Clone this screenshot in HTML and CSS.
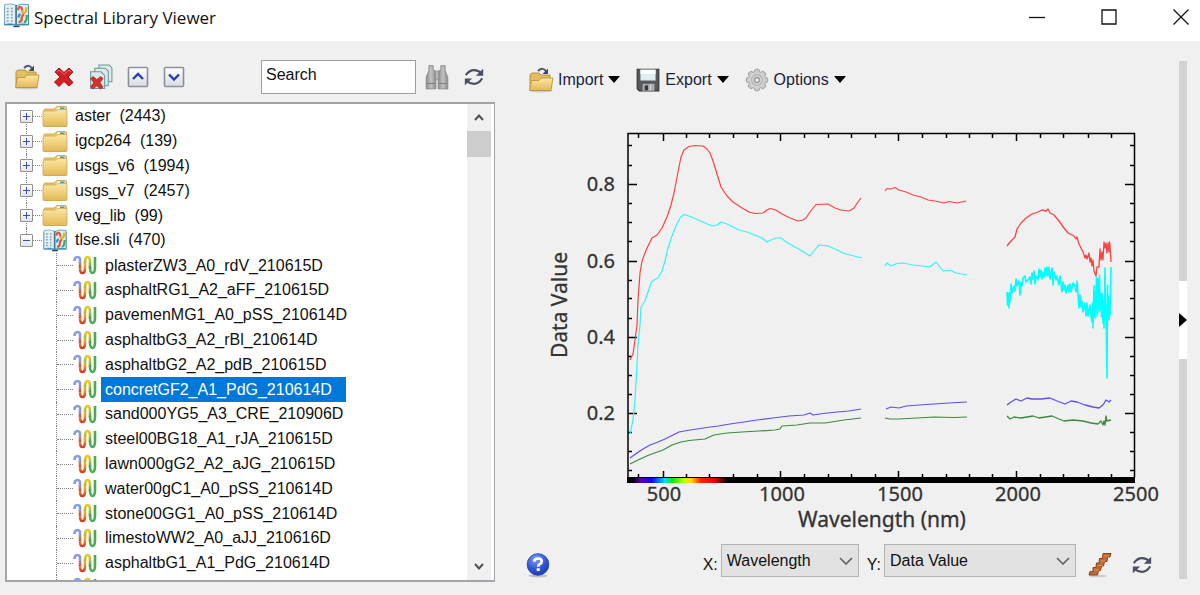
FILE: index.html
```html
<!DOCTYPE html>
<html lang="en">
<head>
<meta charset="utf-8">
<title>Spectral Library Viewer</title>
<link rel="stylesheet" href="styles.css">
</head>
<body>
<svg class="defs" aria-hidden="true">
  <defs>
    <linearGradient id="gold" x1="0" y1="0" x2="0" y2="1"><stop offset="0" stop-color="#fbe7a4"/><stop offset="1" stop-color="#e3b857"/></linearGradient>
    <linearGradient id="cool" x1="0" y1="0" x2="0" y2="1"><stop offset="0" stop-color="#7f9ff0"/><stop offset=".5" stop-color="#9a8fb8"/><stop offset="1" stop-color="#d84a30"/></linearGradient>
    <linearGradient id="warm" x1="0" y1="0" x2="0" y2="1"><stop offset="0" stop-color="#f3c21c"/><stop offset=".5" stop-color="#f0992a"/><stop offset="1" stop-color="#d6371f"/></linearGradient>
    <linearGradient id="leaf" x1="0" y1="0" x2="0" y2="1"><stop offset="0" stop-color="#f2c522"/><stop offset=".5" stop-color="#a8bd4a"/><stop offset="1" stop-color="#3f9b45"/></linearGradient>
    <linearGradient id="face" x1="0" y1="0" x2="0" y2="1"><stop offset="0" stop-color="#ffffff"/><stop offset="1" stop-color="#d9dbe2"/></linearGradient>
    <linearGradient id="steel" x1="0" y1="0" x2="1" y2="0"><stop offset="0" stop-color="#8d8d8d"/><stop offset=".5" stop-color="#c2c2c2"/><stop offset="1" stop-color="#8a8a8a"/></linearGradient>
    <radialGradient id="ball" cx=".4" cy=".25" r=".8"><stop offset="0" stop-color="#7f9ff4"/><stop offset=".6" stop-color="#2f55d4"/><stop offset="1" stop-color="#1c3aa8"/></radialGradient>
    <linearGradient id="visible"><stop offset="0" stop-color="#000"/><stop offset=".08" stop-color="#5a00b4"/><stop offset=".2" stop-color="#1000ff"/><stop offset=".34" stop-color="#00e0ff"/><stop offset=".42" stop-color="#00f000"/><stop offset=".55" stop-color="#c8ff00"/><stop offset=".62" stop-color="#ffd800"/><stop offset=".72" stop-color="#ff2000"/><stop offset=".87" stop-color="#f00000"/><stop offset="1" stop-color="#000"/></linearGradient>
    <symbol id="i-folder" viewBox="0 0 26 22">
      <path d="M2 20V4.500q0-1 1-1h9l3-2.500h8.500q1 0 1 1V20q0 1-1 1H3q-1 0-1-1z" fill="#e8c674" stroke="#c9a14b" stroke-width=".8"/>
      <path d="M15.500 2h7.500v3.500h-9z" fill="#fff"/><path d="M18 2h4.500v1.600H18z" fill="#35a3b5"/>
      <path d="M1 6.500q0-1 1-1h11l3-1.500h8q1 0 1 1V20q0 1-1 1H2q-1 0-1-1z" fill="url(#gold)" stroke="#cda653" stroke-width=".8"/>
    </symbol>
    <symbol id="i-open" viewBox="0 0 26 26">
      <ellipse cx="13" cy="24" rx="12" ry="1.500" fill="#000" opacity=".15"/>
      <path d="M2 22V7.500l2-1.500h7l2 2h9V14" fill="#e3bd62" stroke="#b28a36" stroke-width=".9"/>
      <path d="M10 4q5-4.500 8 .5" fill="none" stroke="#4d5970" stroke-width="2"/><path d="M20 1.500v5.500h-5.500z" fill="#3e4a63"/>
      <path d="M1.500 23.500L3.500 13.500h7.500l2-2.500h12L23 23.500z" fill="url(#gold)" stroke="#bd9238" stroke-width=".9"/>
    </symbol>
    <symbol id="i-delete" viewBox="0 0 22 22">
      <path d="M2 6L6 2L11 6.500L16 2L20 6L15 11L20 16.500L16 20L11 15.500L6 20.500L1.500 16L7 11z" fill="#d21f24" stroke="#9d1319" stroke-width="1" stroke-linejoin="round"/>
      <path d="M4 6l2-2 5 4.500L16 4l2 2" fill="none" stroke="#ef6a66" stroke-width="1"/>
    </symbol>
    <symbol id="i-pages" viewBox="0 0 24 25">
      <g fill="#dbe9e8" stroke="#6e9797" stroke-width="1"><path d="M10 1h10l2.500 3v13H10z"/><path d="M6 4h10l3 3v14H6z"/><path d="M2 7.500h10l3.500 3.500v12.500H2z"/></g>
      <path d="M2 14l2.500-2 3.500 3 3.500-3 2.500 2-3 4 3 4-2.500 2L8 21l-3.500 3L2 22l3-4z" fill="#d6302e" stroke="#a92423" stroke-width=".7"/>
    </symbol>
    <symbol id="i-up" viewBox="0 0 22 22"><rect x="1.500" y="1.500" width="19" height="19" rx="1" fill="url(#face)" stroke="#8c909a" stroke-width="1.600"/><path d="M6 13L11 8l5 5" fill="none" stroke="#2340b4" stroke-width="2.400"/></symbol>
    <symbol id="i-down" viewBox="0 0 22 22"><rect x="1.500" y="1.500" width="19" height="19" rx="1" fill="url(#face)" stroke="#8c909a" stroke-width="1.600"/><path d="M6 8.500l5 5 5-5" fill="none" stroke="#2340b4" stroke-width="2.400"/></symbol>
    <symbol id="i-find" viewBox="0 0 24 24">
      <g fill="url(#steel)" stroke="#8d8d8d" stroke-width=".8"><path d="M4.500 1.500h4v3L11 8v15H2V12l2.500-6z"/><path d="M19.500 1.500h-4v3L13 8v15h9V12l-2.500-6z"/><path d="M10 6.500h4V14h-4z"/></g><path d="M2.500 18h8M13.500 18h8" stroke="#7d7d7d"/>
    </symbol>
    <symbol id="i-refresh" viewBox="0 0 24 20">
      <g fill="none" stroke="#4a5064" stroke-width="2.200"><path d="M3 8Q7 2.500 12 2.500T20 6"/><path d="M21 11.500Q17 17.500 12 17.500T4 14"/></g>
      <path d="M22 1v7.500h-8zM2 19v-7.500h8z" fill="#4a5064"/>
    </symbol>
    <symbol id="i-save" viewBox="0 0 24 24">
      <path d="M2 2h20v20H4l-2-2z" fill="#55585d" stroke="#303338"/><path d="M5 2.500h14v10H5z" fill="#dcecf0"/><path d="M5 2.500h14v4H5z" fill="#f8fdfd"/>
      <path d="M7 15.500h11v6.500H7z" fill="#a8abb0"/><path d="M9 17h3v4.500H9z" fill="#33363b"/><path d="M14.500 16v5.500" stroke="#d7d9db"/>
    </symbol>
    <symbol id="i-gear" viewBox="0 0 24 24">
      <g fill="#c9c9c9" stroke="#9a9a9a" stroke-width=".8"><g id="teeth"><rect x="9.500" y="2" width="5" height="20" rx="2"/><rect x="2" y="9.500" width="20" height="5" rx="2"/></g><use href="#teeth" transform="rotate(45 12 12)"/></g>
      <circle cx="12" cy="12" r="7.500" fill="#d2d2d2"/><circle cx="12" cy="12" r="5" fill="none" stroke="#b0b0b0"/><circle cx="12" cy="12" r="2.200" fill="#eee" stroke="#8a8a8a"/>
    </symbol>
    <symbol id="i-book" viewBox="0 0 26 24">
      <path d="M1 3h24v18.500H1z" fill="#2878a8"/><path d="M1.500 1.500q7-1.500 11.500 1v18.500q-5-2-11.500-.5z" fill="#e4eff3" stroke="#6ba5c0" stroke-width=".8"/><path d="M13 2.500q5-2.500 11.500-1v19q-6.500-1-11.500.5z" fill="#d7eef6" stroke="#3b90b8" stroke-width=".8"/>
      <path d="M4.500 4.500v14M8.500 4.500v14" stroke="#86a4b2" stroke-width="1.800" stroke-dasharray="1.500 1.500"/><path d="M12.500 2v19.500" stroke="#3f7c92" stroke-width="1.500"/><path d="M10 22.500h6" stroke="#24485c" stroke-width="1.500"/>
      <g fill="none" stroke-width="2.200"><path d="M14.500 7q0-3 2-3t2 4" stroke="#e0593a"/><path d="M18.500 7q0 3 2 2.500t2-5.500" stroke="#efad20"/><path d="M15 14q0-3 2-3" stroke="#3a8bd4"/><path d="M15 18.500q3 0 3-3.500t2.500-3.500" stroke="#e0593a"/><path d="M20 18.500q3 0 3-7" stroke="#49a94f"/></g>
    </symbol>
    <symbol id="i-wave" viewBox="0 0 24 20">
      <g fill="none" stroke-width="2.600"><path d="M1.500 6Q1.500 2 4.500 2T7 6v7" stroke="url(#cool)"/><path d="M7 13q0 5 2.500 5t2.500-5V6" stroke="url(#warm)"/><path d="M12 8q0-6 2.500-6T17 7v6" stroke="url(#leaf)"/><path d="M17 12q0 6 2.500 6t2.500-6V2" stroke="#49aa50"/></g>
    </symbol>
    <symbol id="i-help" viewBox="0 0 24 24">
      <ellipse cx="12" cy="22" rx="9" ry="1.500" fill="#000" opacity=".2"/><circle cx="12" cy="11.500" r="10" fill="url(#ball)" stroke="#2444a8" stroke-width=".8"/>
      <path d="M8.500 9Q8.500 6 12 6T15.500 8.700Q15.500 10 13.500 11.200Q12.200 12 12.200 13.500" fill="none" stroke="#fff" stroke-width="2.400"/><rect x="10.800" y="15" width="2.800" height="2.500" fill="#fff"/>
    </symbol>
    <symbol id="i-stack" viewBox="0 0 24 26">
      <ellipse cx="10" cy="24" rx="9" ry="1.300" fill="#000" opacity=".15"/>
      <path d="M15 1.500h8l-1 3.500h-2.500l-.5 4.500h-2.500l-1 4.500h-2l-1 4.500h-2l-1 4.500H1l1-3.500h3v-4h3l.5-4.500H11l.5-4.500h3z" fill="#bf6a35" stroke="#8b421b"/>
      <path d="M15.500 4H21M12.500 9H17M9.500 13.500h5M6 18h5" stroke="#dd9560" stroke-width="1"/>
    </symbol>
    <symbol id="i-chevron" viewBox="0 0 14 8"><path d="M1 1l6 6 6-6" fill="none" stroke="#606060" stroke-width="1.600"/></symbol>
  </defs>
</svg>

<header class="titlebar">
  <svg class="app-icon"><use href="#i-book"/></svg>
  <h1>Spectral Library Viewer</h1>
  <div class="window-buttons">
    <button type="button" aria-label="Minimize"><svg viewBox="0 0 16 16"><path d="M0 8.500h16" stroke="#111" stroke-width="1.300"/></svg></button>
    <button type="button" aria-label="Maximize"><svg viewBox="0 0 16 16"><path d="M1 1h14v14H1z" fill="none" stroke="#111" stroke-width="1.300"/></svg></button>
    <button type="button" aria-label="Close"><svg viewBox="0 0 16 16"><path d="M.5.5l15 15M15.500.5l-15 15" stroke="#111" stroke-width="1.300"/></svg></button>
  </div>
</header>

<main class="workspace">
  <section class="library">
    <div class="library-tools">
      <button type="button" aria-label="Open"><svg class="icon"><use href="#i-open"/></svg></button>
      <button type="button" aria-label="Remove"><svg class="icon small"><use href="#i-delete"/></svg></button>
      <button type="button" aria-label="Remove all"><svg class="icon"><use href="#i-pages"/></svg></button>
      <button type="button" aria-label="Collapse all"><svg class="icon small"><use href="#i-up"/></svg></button>
      <button type="button" aria-label="Expand all"><svg class="icon small"><use href="#i-down"/></svg></button>
      <input class="search" type="text" value="Search" aria-label="Search">
      <button type="button" aria-label="Find"><svg class="icon"><use href="#i-find"/></svg></button>
      <button type="button" class="refresh" aria-label="Refresh"><svg class="icon small"><use href="#i-refresh"/></svg></button>
    </div>
    <div class="tree-box">
      <ul class="tree">
        <li class="branch first"><button type="button" class="toggle plus" aria-label="Expand aster"></button><i class="dots"></i><svg class="folder"><use href="#i-folder"/></svg><span>aster&nbsp; (2443)</span></li>
        <li class="branch"><button type="button" class="toggle plus" aria-label="Expand igcp264"></button><i class="dots"></i><svg class="folder"><use href="#i-folder"/></svg><span>igcp264&nbsp; (139)</span></li>
        <li class="branch"><button type="button" class="toggle plus" aria-label="Expand usgs_v6"></button><i class="dots"></i><svg class="folder"><use href="#i-folder"/></svg><span>usgs_v6&nbsp; (1994)</span></li>
        <li class="branch"><button type="button" class="toggle plus" aria-label="Expand usgs_v7"></button><i class="dots"></i><svg class="folder"><use href="#i-folder"/></svg><span>usgs_v7&nbsp; (2457)</span></li>
        <li class="branch"><button type="button" class="toggle plus" aria-label="Expand veg_lib"></button><i class="dots"></i><svg class="folder"><use href="#i-folder"/></svg><span>veg_lib&nbsp; (99)</span></li>
        <li class="branch last"><button type="button" class="toggle" aria-label="Collapse tlse.sli"></button><i class="dots"></i><svg class="folder"><use href="#i-book"/></svg><span>tlse.sli&nbsp; (470)</span></li>
        <li class="leaf"><svg class="wave"><use href="#i-wave"/></svg><span>plasterZW3_A0_rdV_210615D</span></li>
        <li class="leaf"><svg class="wave"><use href="#i-wave"/></svg><span>asphaltRG1_A2_aFF_210615D</span></li>
        <li class="leaf"><svg class="wave"><use href="#i-wave"/></svg><span>pavemenMG1_A0_pSS_210614D</span></li>
        <li class="leaf"><svg class="wave"><use href="#i-wave"/></svg><span>asphaltbG3_A2_rBl_210614D</span></li>
        <li class="leaf"><svg class="wave"><use href="#i-wave"/></svg><span>asphaltbG2_A2_pdB_210615D</span></li>
        <li class="leaf selected"><svg class="wave"><use href="#i-wave"/></svg><span>concretGF2_A1_PdG_210614D</span></li>
        <li class="leaf"><svg class="wave"><use href="#i-wave"/></svg><span>sand000YG5_A3_CRE_210906D</span></li>
        <li class="leaf"><svg class="wave"><use href="#i-wave"/></svg><span>steel00BG18_A1_rJA_210615D</span></li>
        <li class="leaf"><svg class="wave"><use href="#i-wave"/></svg><span>lawn000gG2_A2_aJG_210615D</span></li>
        <li class="leaf"><svg class="wave"><use href="#i-wave"/></svg><span>water00gC1_A0_pSS_210614D</span></li>
        <li class="leaf"><svg class="wave"><use href="#i-wave"/></svg><span>stone00GG1_A0_pSS_210614D</span></li>
        <li class="leaf"><svg class="wave"><use href="#i-wave"/></svg><span>limestoWW2_A0_aJJ_210616D</span></li>
        <li class="leaf"><svg class="wave"><use href="#i-wave"/></svg><span>asphaltbG1_A1_PdG_210614D</span></li>
        <li class="leaf peek"><svg class="wave"><use href="#i-wave"/></svg></li>
      </ul>
      <div class="scrollbar">
        <button type="button" aria-label="Scroll up"><svg class="scroll-up" viewBox="0 0 10 7"><path d="M1 6l4-4.500L9 6" fill="none" stroke="#505050" stroke-width="2"/></svg></button>
        <div class="thumb"></div>
        <button type="button" class="end" aria-label="Scroll down"><svg viewBox="0 0 10 7"><path d="M1 1l4 4.500L9 1" fill="none" stroke="#505050" stroke-width="2"/></svg></button>
      </div>
    </div>
  </section>

  <section class="plot">
    <div class="plot-tools">
      <button type="button"><svg class="icon"><use href="#i-open"/></svg>Import<i class="caret"></i></button>
      <button type="button"><svg class="icon"><use href="#i-save"/></svg>Export<i class="caret"></i></button>
      <button type="button"><svg class="icon"><use href="#i-gear"/></svg>Options<i class="caret"></i></button>
    </div>
    <svg class="chart" viewBox="496 104 684 431" role="img" aria-label="Data Value against Wavelength (nm)">
      <g class="axes">
        <path d="M629 478V133.500H1135.500V478"/>
        <path d="M664.500 134v7M781.500 134v7M899.500 134v7M1017.500 134v7M664.500 478v-7M781.500 478v-7M899.500 478v-7M1017.500 478v-7"/>
        <path d="M639.500 134v4M687.500 134v4M710.500 134v4M734.500 134v4M758.500 134v4M805.500 134v4M829.500 134v4M852.500 134v4M876.500 134v4M923.500 134v4M947.500 134v4M970.500 134v4M993.500 134v4M1041.500 134v4M1064.500 134v4M1089.500 134v4M1112.500 134v4"/>
        <path d="M639.500 478v-4M687.500 478v-4M710.500 478v-4M734.500 478v-4M758.500 478v-4M805.500 478v-4M829.500 478v-4M852.500 478v-4M876.500 478v-4M923.500 478v-4M947.500 478v-4M970.500 478v-4M993.500 478v-4M1041.500 478v-4M1064.500 478v-4M1089.500 478v-4M1112.500 478v-4"/>
        <path d="M629 184.500h9M629 261.500h9M629 337.500h9M629 413.500h9M1135 184.500h-9M1135 261.500h-9M1135 337.500h-9M1135 413.500h-9"/>
        <path d="M629 145.500h4M629 165.500h4M629 203.500h4M629 222.500h4M629 241.500h4M629 280.500h4M629 298.500h4M629 318.500h4M629 356.500h4M629 375.500h4M629 394.500h4M629 432.500h4M629 451.500h4M629 470.500h4"/>
        <path d="M1135 145.500h-4M1135 165.500h-4M1135 203.500h-4M1135 222.500h-4M1135 241.500h-4M1135 280.500h-4M1135 298.500h-4M1135 318.500h-4M1135 356.500h-4M1135 375.500h-4M1135 394.500h-4M1135 432.500h-4M1135 451.500h-4M1135 470.500h-4"/>
      </g>
      <rect x="628" y="477" width="508" height="6"/>
      <rect x="634" y="478" width="94" height="5" fill="url(#visible)"/>
      <g class="curve cyan">
        <path d="M631 434L634 420L636 400L638 365L639 345L641 325L642 307L646 301L649 292L652 283L655 280L659 278L663 271L666 261L669 248L673 236L677 226L681 218L685 214.500L690 216L697 219L706 223L713 226L718 225L722 222L728 224L734 227L740 230L748 232L758 236L763 238L768 242L772 240L777 238L782 238L789 243L796 247L803 251L811 256L815 251L820 245L829 246L836 249L844 253L853 255.500L863 258"/>
        <path d="M886 266L888 263L892 266L898 263.500L904 263L914 265L924 266L931 267L937 262L944 271L951 270L957 273L963 274L968 275"/>
        <path class="noisy" d="M1008 292L1008.500 305L1009 293L1010 308L1010.500 293L1011 302L1012 284L1013 293L1015 286L1016 291L1017 279L1018 286L1020 281L1021 295L1022 282L1023 286L1024 278L1026 276L1027 282L1029 280L1031 277L1032 284L1033 273L1034 279L1035 271L1036 284L1037 276L1039 280L1040 269L1041 277L1042 270L1043 279L1044 272L1045 277L1046 268L1047 276L1048 267L1049 276L1050 267L1051 279L1053 268L1054 285L1055 272L1057 280L1058 276L1060 285L1061 276L1063 292L1064 282L1065 290L1066 285L1067 293L1069 285L1070 292L1071 284L1072 292L1074 283L1076 286L1077 292L1078 281L1079 294L1080 308L1081 295L1082 307L1083 301L1084 312L1086 303L1087 316L1088 303L1089 316L1091 305L1092 316L1093 322L1093.500 303L1094 328L1095 286L1096 318L1096.500 292L1097 305L1097.500 277L1098 316L1099 279L1100 312L1100.500 275L1101 310L1102 294L1102.500 317L1103 293L1104 323L1104.500 301L1105 328L1106 268L1106.500 318L1107 305L1108 378L1108.500 285L1109 316L1109.500 296L1110 320L1110.500 304L1111 315L1112 267"/>
      </g>
      <g class="curve red">
        <path d="M631 360L634 354L636 340L638 325L639 300L641 273L643 261L648 248L653 238L658 235L663 228L668 217L672 205L675 193L679 172L682 157L685 150L690 146.500L696 145.500L704 146L708 149L711 153L714 161L718 174L722 187L728 196L734 202L743 208L750 212L756 213.500L764 213L768 210L771 208.500L777 210L783 214L791 218L799 221L804 220L807 218L811 212L817 204.500L829 204L836 208L842 210L850 211L855 208L859 202L862 198"/>
        <path d="M886 191L888 188.500L892 189L896 187.500L900 190L907 192L914 195L922 197L929 200L936 201L945 203L950 201.500L958 203L967 201"/>
        <path class="fuzzy" d="M1008 246L1012 241L1016 237L1018 229L1022 223L1027 218L1033 214L1039 212L1043 210L1047 211L1049 209L1051 213L1055 215L1060 221L1065 228L1069 233L1075 236L1077 239L1078 237L1080 244L1084 252L1086 258L1087 255L1088 259L1090 253L1091 262L1092 258L1093 266L1094 260L1095 271L1097 276L1098 267L1100 267L1101 249L1102 260L1103 252L1104 260L1105 242L1106 248L1107 243L1108 253L1109 243L1110 252L1110.500 242L1111 246L1112 262"/>
      </g>
      <g class="curve blue">
        <path d="M631 458L638 453L644 449L651 445L659 442L666 439L674 435L680 432L688 430.500L698 429L708 427.500L719 426L731 424L745 422L758 420L774 418L790 416L805 415L811 413L814 415L824 413.500L838 412L850 411L862 409"/>
        <path d="M887 409L892 407L900 408L907 406L920 405L935 404L950 403L968 402"/>
        <path class="fuzzy" d="M1008 405L1012 402L1017 399L1022 401L1028 398L1033 399L1042 399L1051 398L1058 401L1066 404L1072 401L1078 402L1086 405L1094 407L1100 408L1104 405L1107 400L1110 402L1112 400"/>
      </g>
      <g class="curve green">
        <path d="M631 464L639 460L650 455L664 450L673 445L682 442L690 440.500L706 439L715 435L728 433L743 432L760 431L776 430L781 429L783 426L798 425L811 423L826 423L845 420L862 418"/>
        <path d="M886 418L891 419L900 419L918 418L935 417L955 417.500L968 417"/>
        <path class="fuzzy" d="M1008 416L1011 419L1015 417L1022 418L1034 416L1040 418L1053 416L1060 419L1065 421L1074 420L1084 421L1092 423L1099 424L1102 421L1104 425L1105 421L1106 425L1107 416L1108 421L1112 420"/>
      </g>
      <g class="axis-text">
        <g class="y-ticks"><text x="616" y="191">0.8</text><text x="616" y="268">0.6</text><text x="616" y="344">0.4</text><text x="616" y="420">0.2</text></g>
        <text x="665" y="501">500</text><text x="783" y="501">1000</text><text x="901" y="501">1500</text><text x="1019" y="501">2000</text><text x="1137" y="501">2500</text>
        <text class="axis-title" x="883" y="527">Wavelength (nm)</text>
        <text class="axis-title" transform="translate(568 305) rotate(-90)">Data Value</text>
      </g>
    </svg>
    <div class="plot-footer">
      <button type="button" class="help" aria-label="Help"><svg class="icon"><use href="#i-help"/></svg></button>
      <label for="x-axis">X:</label>
      <div class="picker x-picker"><select id="x-axis"><option>Wavelength</option></select><svg><use href="#i-chevron"/></svg></div>
      <label for="y-axis">Y:</label>
      <div class="picker y-picker"><select id="y-axis"><option>Data Value</option></select><svg><use href="#i-chevron"/></svg></div>
      <button type="button" class="stack" aria-label="Stack plots"><svg class="icon"><use href="#i-stack"/></svg></button>
      <button type="button" class="reset" aria-label="Reset"><svg class="icon small"><use href="#i-refresh"/></svg></button>
    </div>
  </section>
  <div class="splitter"><button type="button" aria-label="Show side panel"><svg viewBox="0 0 8 14"><path d="M0 0l8 7-8 7z"/></svg></button></div>
</main>
</body>
</html>
```

FILE: styles.css
```css
* { box-sizing: border-box; }

body {
  display: flex;
  flex-direction: column;
  height: 100vh;
  margin: 0;
  background: #f0f0f0;
  color: #111;
  font: 16px "Liberation Sans", Arial, sans-serif;
  overflow: hidden;
}

button {
  display: flex;
  align-items: center;
  justify-content: center;
  padding: 0;
  border: 0;
  background: none;
  color: inherit;
  font: inherit;
}

svg { display: block; flex: none; }
.defs { position: absolute; width: 0; height: 0; }
.icon { width: 26px; height: 26px; }
.icon.small { width: 22px; height: 22px; }

.titlebar {
  display: flex;
  align-items: flex-start;
  flex: none;
  height: 41px;
  padding: 3px 11px 0 3px;
  background: #fff;
}
.app-icon { width: 27px; height: 25px; }
.titlebar h1 {
  margin: 3px 0 0 4px;
  font: 17px/24px "Open Sans", "Noto Sans", sans-serif;
}
.window-buttons { display: flex; gap: 56px; margin: 6px 0 0 auto; }
.window-buttons svg { width: 16px; height: 16px; }

.workspace { display: flex; flex: 1; min-height: 0; }

.library {
  display: flex;
  flex-direction: column;
  flex: none;
  width: 41.25%;
  padding: 0 0 13px 5px;
}
.library-tools {
  display: flex;
  align-items: center;
  flex: none;
  gap: 12px;
  height: 61px;
  padding: 10px 9px 0 9px;
}
.library-tools button { flex: none; }
.library-tools .icon.small { margin: 0 1px; }
.search {
  width: 155px;
  min-width: 0;
  height: 34px;
  margin: 0 -4px 0 auto;
  padding: 0 4px 3px;
  border: 1px solid #a0a0a0;
  border-radius: 0;
  background: #fff;
  color: #111;
  font: inherit;
}

.tree-box {
  display: flex;
  flex: 1;
  min-height: 0;
  padding: 0 3px 0 0;
  border: 2px solid #a3a3a8;
  border-width: 2px 1px 2px 2px;
  background: #fff;
}
.tree {
  display: flex;
  flex-direction: column;
  flex: 1;
  min-width: 0;
  margin: 0;
  padding: 0;
  list-style: none;
}
.tree li {
  position: relative;
  display: flex;
  align-items: center;
  flex: 1;
  min-height: 0;
  white-space: pre;
}
.branch { padding-left: 13px; }
.branch::before {
  content: "";
  position: absolute;
  left: 19px;
  top: 0;
  bottom: 0;
  border-left: 1px dotted #808080;
}
.branch.first::before { top: 50%; }
.branch.last::before { bottom: 50%; }
.toggle {
  position: relative;
  flex: none;
  width: 13px;
  height: 13px;
  border: 1px solid #919191;
  border-radius: 1px;
  background: linear-gradient(#fff, #e4e4e8);
}
.toggle::before, .toggle.plus::after {
  content: "";
  position: absolute;
  left: 2px;
  top: 5px;
  width: 7px;
  height: 1px;
  background: #3450b0;
}
.toggle.plus::after { left: 5px; top: 2px; width: 1px; height: 7px; }
.dots { width: 9px; border-top: 1px dotted #808080; }
.folder { width: 26px; height: 23px; margin-right: 7px; }
.leaf { padding-left: 66px; }
.leaf::before {
  content: "";
  position: absolute;
  left: 49px;
  top: 0;
  bottom: 0;
  border-left: 1px dotted #808080;
}
.leaf::after {
  content: "";
  position: absolute;
  left: 50px;
  top: 50%;
  width: 16px;
  border-top: 1px dotted #808080;
}
.wave { width: 24px; height: 20px; margin-right: 4px; }
.leaf span { padding: 3px 14px 3px 4px; line-height: 19px; }
.selected span { background: #0078d7; color: #fff; }
.tree .peek { flex: 0 0 5px; align-items: flex-start; overflow: hidden; padding-top: 2px; }
.peek::after { display: none; }

.scrollbar {
  display: flex;
  flex-direction: column;
  flex: none;
  width: 24px;
  background: #f0f0f0;
}
.scrollbar button { height: 27px; }
.scrollbar svg { width: 10px; height: 7px; }
.scrollbar .end { margin-top: auto; }
.thumb { height: 26px; background: #cdcdcd; }

.plot {
  display: flex;
  flex-direction: column;
  flex: 1;
  min-width: 0;
}
.plot-tools {
  display: flex;
  align-items: center;
  flex: none;
  gap: 15px;
  height: 63px;
  padding: 14px 0 0 33px;
}
.plot-tools button { gap: 4px; color: #1b2140; }
.caret {
  margin-left: 1px;
  border: 6px solid transparent;
  border-top: 7px solid #000;
  border-bottom: 0;
}

.chart { flex: 1; width: 100%; min-height: 0; }
.axes path { fill: none; stroke: #000; stroke-width: 1.5; }
.curve path { fill: none; stroke-width: 1.2; stroke-linejoin: round; }
.curve .noisy { stroke: #0ff; stroke-width: 1.6; }
.curve .fuzzy { stroke-width: 1.3; }
.cyan { stroke: #32f4fa; }
.red { stroke: #fb4242; }
.blue { stroke: #5a50f0; }
.green { stroke: #3c8a3c; }
.axis-text {
  fill: #333;
  stroke: #333;
  stroke-width: 0.3;
  font: 20px "Noto Sans", "Open Sans", sans-serif;
  text-anchor: middle;
}
.y-ticks { text-anchor: end; }
.axis-title { font-size: 21px; }

.plot-footer {
  display: flex;
  flex: none;
  align-items: center;
  height: 60px;
  padding: 0 26px 10px 30px;
}
.help { margin: 10px auto 0 0; }
.plot-footer label { padding-top: 9px; margin-right: 3px; }
.picker { position: relative; }
.picker select {
  width: 100%;
  height: 33px;
  padding: 0 5px;
  border: 1px solid #b4b4b4;
  border-radius: 0;
  background: #e2e2e2;
  color: #111;
  font: inherit;
  appearance: none;
}
.picker svg {
  position: absolute;
  right: 6px;
  top: 13px;
  width: 14px;
  height: 8px;
  pointer-events: none;
}
.x-picker { width: 138px; margin-right: 8px; }
.y-picker { width: 192px; margin-right: 11px; }
.stack, .reset { margin-top: 9px; }
.reset { margin-left: 18px; }

.splitter {
  display: flex;
  align-items: center;
  justify-content: center;
  width: 8px;
  margin: 20px 13px 16px 0;
  background: #d3d3d3;
}
.splitter button { width: 8px; height: 78px; background: #fff; }
.splitter svg { width: 8px; height: 14px; }
```
